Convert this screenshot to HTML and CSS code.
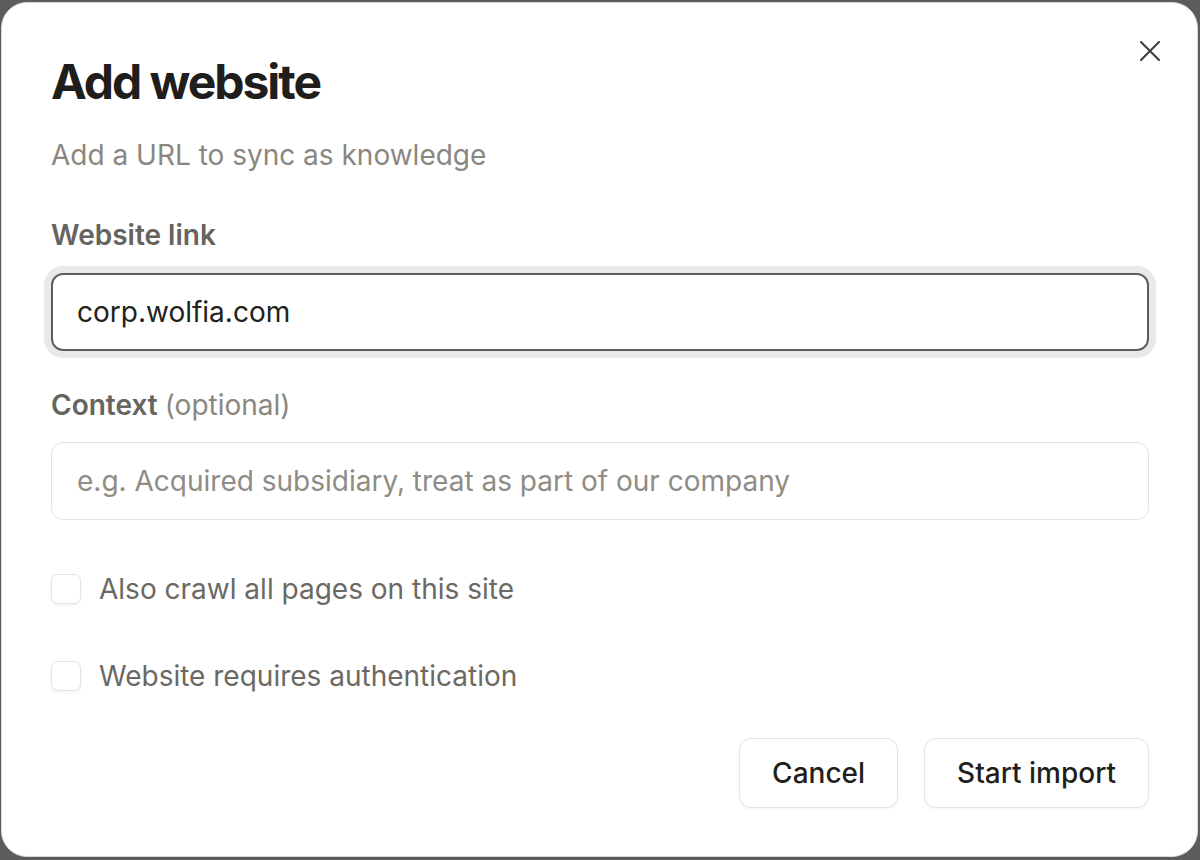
FILE: index.html
```html
<!DOCTYPE html>
<html lang="en">
<head>
<meta charset="utf-8">
<title>Add website</title>
<link rel="stylesheet" href="styles.css">
</head>
<body>
<div class="page"></div>
<div class="overlay">
  <div class="modal" role="dialog" aria-labelledby="dlg-title">
    <button class="close" aria-label="Close">
      <svg viewBox="0 0 20 20" width="20" height="20"><path d="M1 1 L19 19 M19 1 L1 19" stroke="#3c3c3a" stroke-width="2" stroke-linecap="round" fill="none"/></svg>
    </button>
    <h1 class="title" id="dlg-title">Add website</h1>
    <p class="subtitle">Add a URL to sync as knowledge</p>
    <label class="label label-first">Website link</label>
    <div class="field field-focus">corp.wolfia.com</div>
    <label class="label label-second">Context <span class="opt">(optional)</span></label>
    <div class="field field-empty">e.g. Acquired subsidiary, treat as part of our company</div>
    <div class="check-row check-first"><span class="box"></span><span class="check-text">Also crawl all pages on this site</span></div>
    <div class="check-row check-second"><span class="box"></span><span class="check-text">Website requires authentication</span></div>
    <div class="actions">
      <button class="btn">Cancel</button>
      <button class="btn">Start import</button>
    </div>
  </div>
</div>
</body>
</html>
```

FILE: styles.css
```css
* { box-sizing: border-box; }
html, body { margin: 0; padding: 0; }
body {
  font-family: Inter, "Noto Sans", "Liberation Sans", sans-serif;
  background: #ffffff;
  width: 1200px;
  height: 860px;
  overflow: hidden;
}
.page { height: 860px; background: #fff; }
.overlay {
  position: fixed;
  inset: 0;
  background: rgba(0, 0, 0, 0.64);
  padding: 2px 2px 3px 1px;
  display: flex;
}
.modal {
  position: relative;
  flex: 1;
  background: #ffffff;
  border: 1px solid #d9d9d7;
  border-radius: 26px;
  padding: 50px 48px 48px 49px;
  display: flex;
  flex-direction: column;
}
.close {
  position: absolute;
  top: 38px;
  right: 37px;
  width: 20px;
  height: 20px;
  padding: 0;
  border: 0;
  background: none;
  display: flex;
}
.title {
  margin: 0;
  font-size: 48px;
  line-height: 58px;
  font-weight: 700;
  letter-spacing: -0.042em;
  color: #1f1e1c;
}
.subtitle {
  margin: 26px 0 0;
  font-size: 28px;
  line-height: 36px;
  color: #8a877f;
}
.label {
  display: block;
  font-size: 28px;
  line-height: 34px;
  font-weight: 600;
  color: #66645e;
}
.label-first { margin-top: 45px; }
.label-second { margin-top: 37px; }
.opt { font-weight: 400; color: #8a877f; }
.field {
  height: 78px;
  border-radius: 12px;
  display: flex;
  align-items: center;
  font-size: 28px;
}
.field-focus {
  margin-top: 21px;
  border: 2px solid #5e5e58;
  box-shadow: 0 0 0 7px #e9e9e7;
  padding-left: 24px;
  color: #222220;
}
.field-empty {
  margin-top: 20px;
  border: 1px solid #e2e2e0;
  padding-left: 25px;
  color: #8f8c85;
}
.check-row {
  height: 36px;
  display: flex;
  align-items: center;
  gap: 18px;
}
.check-first { margin-top: 51px; }
.check-second { margin-top: 51px; }
.box {
  width: 30px;
  height: 30px;
  border: 1px solid #e4e4e2;
  border-radius: 7px;
  background: #fff;
  box-shadow: 0 1px 3px rgba(0, 0, 0, 0.07);
}
.check-text {
  font-size: 28px;
  line-height: 36px;
  color: #6b6963;
}
.actions {
  margin-top: 44px;
  display: flex;
  justify-content: flex-end;
  gap: 26px;
}
.btn {
  height: 70px;
  padding: 0 32px;
  border: 1px solid #e4e4e2;
  border-radius: 12px;
  background: #fff;
  font-family: inherit;
  font-size: 28px;
  line-height: 34px;
  font-weight: 500;
  color: #1f1f1d;
  box-shadow: 0 1px 3px rgba(0, 0, 0, 0.05);
}
```
